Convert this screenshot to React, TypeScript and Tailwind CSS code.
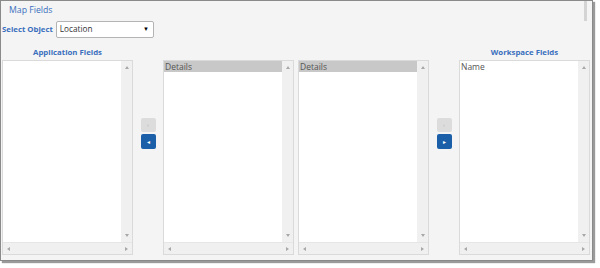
import type { ReactNode } from 'react';

const FONT = { fontFamily: '"Open Sans", "Liberation Sans", sans-serif' };

function Arrow({ dir }: { dir: 'up' | 'down' | 'left' | 'right' }) {
  const cls = {
    up: 'border-x-[2.5px] border-b-[3px] border-x-transparent border-b-[#a8a8a8]',
    down: 'border-x-[2.5px] border-t-[3px] border-x-transparent border-t-[#a8a8a8]',
    left: 'border-y-[2.5px] border-r-[3px] border-y-transparent border-r-[#a8a8a8]',
    right: 'border-y-[2.5px] border-l-[3px] border-y-transparent border-l-[#a8a8a8]',
  }[dir];
  return <span className={`block h-0 w-0 ${cls}`} />;
}

function ListBox({ item, highlight }: { item?: string; highlight?: boolean }) {
  return (
    <div className="flex h-[195px] w-[131px] flex-col border border-[#dadada] bg-[#f0f0f0]">
      <div className="flex min-h-0 flex-1">
        <div className="flex-1 bg-white">
          {item && (
            <div
              className={`h-[11px] pl-[1px] text-[8.5px] leading-[11px] text-[#555] ${
                highlight ? 'bg-[#c8c8c8]' : ''
              }`}
            >
              {item}
            </div>
          )}
        </div>
        <div className="flex w-[11px] flex-col items-center justify-between py-[5px]">
          <Arrow dir="up" />
          <Arrow dir="down" />
        </div>
      </div>
      <div className="flex h-[12px] items-center justify-between border-t border-[#e6e6e6] px-[4px]">
        <Arrow dir="left" />
        <Arrow dir="right" />
      </div>
    </div>
  );
}

function MoveButtons({ first, second }: { first: ReactNode; second: ReactNode }) {
  return (
    <div className="flex w-[30px] flex-col items-center gap-[2px] pt-[58px]">
      <div className="flex h-[14px] w-[15px] items-center justify-center rounded-[2px] bg-[#dcdcdc] text-[6px] leading-none text-[#b0b0b0]">
        {first}
      </div>
      <div className="flex h-[15px] w-[15px] items-center justify-center rounded-[2px] bg-[#1b5fa9] text-[6px] leading-none text-white">
        {second}
      </div>
    </div>
  );
}

export default function App() {
  return (
    <div className="h-[268px] w-[600px] bg-white" style={FONT}>
      <div className="relative h-[261px] w-[593px] border border-[#8a8a8a] bg-[#f4f4f4] shadow-[2px_2px_1px_#9a9a9a]">
        {/* page scrollbar thumb */}
        <div className="absolute right-[5px] top-0 h-[20px] w-[3px] bg-[#d4d4d4]" />

        <div className="pl-[8px] pt-[3px] text-[8.7px] leading-[13px] text-[#3a6fbe]">Map Fields</div>

        <div className="mt-[4px] flex items-center pl-[1px]">
          <span className="text-[7.8px] font-bold text-[#3a6fbe]">Select Object</span>
          <div className="ml-[3px] flex h-[17px] w-[98px] items-center justify-between rounded-[2px] border border-[#b4b4b4] bg-white pl-[3px] pr-[4px]">
            <span className="text-[8.2px] text-[#333]">Location</span>
            <span className="text-[6px] text-black">▼</span>
          </div>
        </div>

        <div className="mt-[7px] flex pl-[1px]">
          <div className="w-[131px] text-center text-[7.8px] font-bold leading-[14px] text-[#3a6fbe]">Application Fields</div>
          <div className="w-[326px]" />
          <div className="w-[131px] text-center text-[7.8px] font-bold leading-[14px] text-[#3a6fbe]">Workspace Fields</div>
        </div>

        <div className="mt-[1px] flex pl-[1px]">
          <ListBox />
          <MoveButtons first="›" second="◂" />
          <ListBox item="Details" highlight />
          <div className="w-[4px]" />
          <ListBox item="Details" highlight />
          <MoveButtons first="‹" second="▸" />
          <ListBox item="Name" />
        </div>
      </div>
    </div>
  );
}
